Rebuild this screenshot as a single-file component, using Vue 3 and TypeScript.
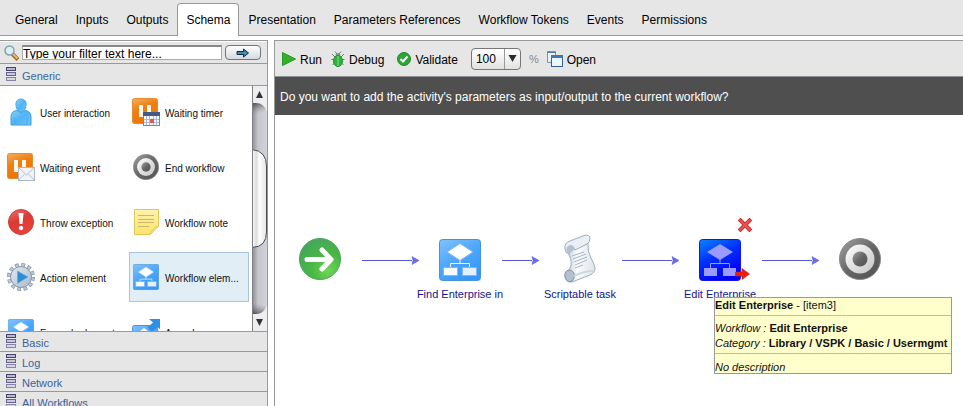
<script setup lang="ts">
import { ref } from 'vue'

interface PaletteItem {
  label: string
  icon: string
}

interface DiagramNode {
  id: string
  icon: string
  label: string
  x: number
  y: number
}

const tabs: string[] = [
  'General',
  'Inputs',
  'Outputs',
  'Schema',
  'Presentation',
  'Parameters References',
  'Workflow Tokens',
  'Events',
  'Permissions',
]
const activeTab = ref('Schema')

const palette: PaletteItem[] = [
  { label: 'User interaction', icon: 'user' },
  { label: 'Waiting timer', icon: 'timer' },
  { label: 'Waiting event', icon: 'mail' },
  { label: 'End workflow', icon: 'end' },
  { label: 'Throw exception', icon: 'error' },
  { label: 'Workflow note', icon: 'note' },
  { label: 'Action element', icon: 'gear' },
  { label: 'Workflow elem...', icon: 'flow' },
  { label: 'Foreach element', icon: 'flow' },
  { label: 'Asynchrono...', icon: 'async' },
]
const selectedItem = ref('Workflow elem...')

const groups: string[] = ['Basic', 'Log', 'Network', 'All Workflows']

const nodes: DiagramNode[] = [
  { id: 'start', icon: 'start', label: '', x: 45, y: 144 },
  { id: 'find', icon: 'flow', label: 'Find Enterprise in', x: 185, y: 144 },
  { id: 'script', icon: 'script', label: 'Scriptable task', x: 305, y: 144 },
  { id: 'edit', icon: 'flow-dark', label: 'Edit Enterprise', x: 445, y: 144 },
  { id: 'end', icon: 'end', label: '', x: 585, y: 144 },
]

const links: number[][] = [
  [87, 144],
  [227, 264],
  [347, 404],
  [487, 544],
]

const filterText = ref('Type your filter text here...')
const zoom = ref('100')
</script>

<template>
  <svg class="defs" width="0" height="0" aria-hidden="true">
    <defs>
      <linearGradient id="g-blue" x1="0" y1="0" x2="0.6" y2="1">
        <stop offset="0" stop-color="#82c4fb" />
        <stop offset="0.5" stop-color="#4fa8fb" />
        <stop offset="1" stop-color="#3797f8" />
      </linearGradient>
      <linearGradient id="g-dark" x1="0" y1="0" x2="0.5" y2="1">
        <stop offset="0" stop-color="#0a84ff" />
        <stop offset="0.5" stop-color="#0030fa" />
        <stop offset="1" stop-color="#0000f4" />
      </linearGradient>
      <linearGradient id="g-orange" x1="0" y1="0" x2="0.4" y2="1">
        <stop offset="0" stop-color="#f6ae62" />
        <stop offset="0.45" stop-color="#ee8012" />
        <stop offset="1" stop-color="#ee7400" />
      </linearGradient>
      <linearGradient id="g-person" x1="0" y1="0" x2="1" y2="1">
        <stop offset="0" stop-color="#8bd2fb" />
        <stop offset="0.5" stop-color="#4fb3f6" />
        <stop offset="1" stop-color="#6ec6fb" />
      </linearGradient>
      <linearGradient id="g-ring" x1="0" y1="0" x2="1" y2="1">
        <stop offset="0" stop-color="#a2a2a2" />
        <stop offset="0.5" stop-color="#666" />
        <stop offset="1" stop-color="#505050" />
      </linearGradient>
      <linearGradient id="g-silver" x1="0" y1="0" x2="1" y2="1">
        <stop offset="0" stop-color="#fff" />
        <stop offset="1" stop-color="#c4c4c4" />
      </linearGradient>
      <linearGradient id="g-red" x1="0" y1="0" x2="0.5" y2="1">
        <stop offset="0" stop-color="#ee7370" />
        <stop offset="0.5" stop-color="#df3834" />
        <stop offset="1" stop-color="#e8413c" />
      </linearGradient>
      <radialGradient id="g-green" cx="0.7" cy="0.78" r="0.8">
        <stop offset="0" stop-color="#6fd658" />
        <stop offset="0.5" stop-color="#48b843" />
        <stop offset="1" stop-color="#45a85a" />
      </radialGradient>
      <linearGradient id="g-note" x1="0" y1="0" x2="0" y2="1">
        <stop offset="0" stop-color="#fdf2ae" />
        <stop offset="1" stop-color="#fbe468" />
      </linearGradient>
      <linearGradient id="g-gear" x1="0" y1="0" x2="1" y2="1">
        <stop offset="0" stop-color="#e3eaf0" />
        <stop offset="1" stop-color="#a9bac9" />
      </linearGradient>
      <linearGradient id="g-paper" x1="0" y1="0" x2="1" y2="0">
        <stop offset="0" stop-color="#bcc7d2" />
        <stop offset="0.4" stop-color="#fafbfc" />
        <stop offset="1" stop-color="#dfe5ea" />
      </linearGradient>
      <linearGradient id="g-track" x1="0" y1="0" x2="1" y2="0">
        <stop offset="0" stop-color="#8a8b90" />
        <stop offset="0.4" stop-color="#c5c6cd" />
        <stop offset="1" stop-color="#d2d3da" />
      </linearGradient>
      <linearGradient id="g-thumb" x1="0" y1="0" x2="1" y2="0">
        <stop offset="0" stop-color="#fff" />
        <stop offset="0.3" stop-color="#dcdcde" />
        <stop offset="0.5" stop-color="#fff" />
        <stop offset="1" stop-color="#e6e6e8" />
      </linearGradient>
      <linearGradient id="g-shade" x1="0" y1="0" x2="0.3" y2="1">
        <stop offset="0" stop-color="#333" stop-opacity="0.9" />
        <stop offset="1" stop-color="#888" stop-opacity="0" />
      </linearGradient>
      <linearGradient id="g-shade-low" x1="0" y1="1" x2="0.3" y2="0">
        <stop offset="0" stop-color="#333" stop-opacity="0.9" />
        <stop offset="1" stop-color="#888" stop-opacity="0" />
      </linearGradient>
    </defs>

    <symbol id="ic-user" viewBox="0 0 28 28">
      <path d="M4 27V19Q4 13 10 12.500L14 15L18 12.500Q24 13 24 19V27Z" fill="url(#g-person)" stroke="#3c9fdc" />
      <path d="M14 1C18 1 19.500 4 19 7.500S17 14 14 14S9.500 11 9 7.500S10 1 14 1Z" fill="url(#g-person)" stroke="#4caae4" />
      <path d="M8 20V27M20 20V27" stroke="#48a8e4" stroke-width="0.700" />
    </symbol>

    <symbol id="ic-pause" viewBox="0 0 28 28">
      <rect x="0.500" y="0.500" width="25" height="25" rx="2" fill="url(#g-orange)" stroke="#e58a35" />
      <rect x="7" y="7" width="4" height="12" fill="#fff8ee" />
      <rect x="15" y="7" width="4" height="12" fill="#fff8ee" />
    </symbol>

    <symbol id="ic-timer" viewBox="0 0 28 28">
      <use href="#ic-pause" width="28" height="28" />
      <rect x="11.500" y="14.500" width="16" height="13" fill="#f4f8fd" stroke="#7189ae" />
      <rect x="11" y="14" width="17" height="4" fill="#425a88" />
      <path d="M12 21.500H27M12 24.500H27M14.500 18V27M17.500 18V27M21.500 18V27M24.500 18V27" stroke="#a9bcd8" />
      <rect x="18" y="21" width="4" height="4" fill="#e8564e" />
    </symbol>

    <symbol id="ic-mail" viewBox="0 0 28 28">
      <use href="#ic-pause" width="28" height="28" />
      <rect x="11.500" y="14.500" width="16" height="13" fill="#f0f4f8" stroke="#a9b8c8" />
      <path d="M12 15L19.500 22L27 15M12 27L17.500 21M27 27L21.500 21" fill="none" stroke="#b4c1cf" />
    </symbol>

    <symbol id="ic-end" viewBox="0 0 42 42">
      <circle cx="21" cy="21" r="20.500" fill="url(#g-ring)" stroke="#8a8a8a" />
      <circle cx="21" cy="21" r="14.500" fill="url(#g-silver)" />
      <circle cx="21" cy="21" r="7.500" fill="url(#g-ring)" />
    </symbol>

    <symbol id="ic-error" viewBox="0 0 28 28">
      <circle cx="14" cy="14" r="12.500" fill="url(#g-red)" stroke="#c93b38" />
      <path d="M11.500 5H16.500L15.500 16H12.500Z" fill="#fff" />
      <circle cx="14" cy="20" r="2.200" fill="#fff" />
    </symbol>

    <symbol id="ic-note" viewBox="0 0 28 28">
      <path d="M2.500 1.500H26.500V18L18 26.500H2.500Z" fill="url(#g-note)" stroke="#dfc65d" />
      <path d="M26.500 18Q20 20 18 26.500Z" fill="#fff7c8" stroke="#dfc65d" />
      <path d="M6 7.500H22M6 11.500H22M6 14.500H22M6 18.500H17" stroke="#cdb86a" />
    </symbol>

    <symbol id="ic-gear" viewBox="0 0 28 28">
      <circle cx="14" cy="14" r="12" fill="none" stroke="#798da3" stroke-width="4" stroke-dasharray="3.600 2.683" />
      <circle cx="14" cy="14" r="12" fill="none" stroke="#bccad6" stroke-width="3" stroke-dasharray="2.400 3.883" stroke-dashoffset="-0.600" />
      <circle cx="14" cy="14" r="10.500" fill="url(#g-gear)" stroke="#8799ac" />
      <path d="M10.500 8L21 14L10.500 20.500Z" fill="#2c8dd3" stroke="#5fb0e4" stroke-width="0.700" />
    </symbol>

    <symbol id="ic-flow" viewBox="0 0 42 42">
      <rect x="0.500" y="0.500" width="41" height="41" rx="3" fill="url(#g-blue)" stroke="#4692d4" />
      <path d="M21 20V25M11.500 30V24.500H30.500V30" fill="none" stroke="#fff" />
      <path d="M21 4.500L34 13L21 21.500L8 13Z" fill="#fff" stroke="#7bb8ef" />
      <rect x="4.500" y="28.500" width="14" height="8" fill="#f6fbff" stroke="#7bb8ef" />
      <rect x="23.500" y="28.500" width="14" height="8" fill="#e2f0fe" stroke="#7bb8ef" />
    </symbol>

    <symbol id="ic-flow-dark" viewBox="0 0 42 42">
      <rect x="0.500" y="0.500" width="41" height="41" rx="3" fill="url(#g-dark)" stroke="#1414ec" />
      <path d="M21 20V25M11.500 30V24.500H30.500V30" fill="none" stroke="#9a9aff" />
      <path d="M21 5L34 13L21 21L8 13Z" fill="#9a9aff" />
      <rect x="5" y="29" width="13" height="8" fill="#9a9aff" />
      <rect x="24" y="29" width="13" height="8" fill="#9a9aff" />
    </symbol>

    <symbol id="ic-async" viewBox="0 0 28 28">
      <rect x="0.500" y="7.500" width="25" height="25" rx="2" fill="url(#g-blue)" stroke="#4692d4" />
      <path d="M12 10L20 16L12 22L4 16Z" fill="#fff" />
      <path d="M17 1H29V12L25.500 9L20 14L15.500 9.500L21 4.500Z" fill="#2f8fe6" />
    </symbol>

    <symbol id="ic-start" viewBox="0 0 42 42">
      <circle cx="21" cy="21" r="20.500" fill="url(#g-green)" stroke="#4ba556" />
      <path d="M8 21.500H30M23 12L32 21.500L23 31" fill="none" stroke="#fff" stroke-width="5" stroke-linecap="round" stroke-linejoin="round" />
    </symbol>

    <symbol id="ic-script" viewBox="0 0 42 50">
      <path d="M9 17L29 9Q28 17 32 24Q35 29 36 34Q36 39 31 41L13 48Q6 48 6 41L11 34Q14 28 10 21Z" fill="url(#g-paper)" stroke="#9dabb9" />
      <path d="M6 15Q5 9 11 7L25 1.500Q31 0 31 4.500Q31 8 28 10L16 16Q14 11 11 13L10 20Q6 19 6 15Z" fill="#eaeff4" stroke="#9dabb9" />
      <path d="M8 13Q13 8 16 15L10 20Q6 18 8 13Z" fill="#b3c0cf" />
      <path d="M6 39Q7 36 11 36Q17 38 15 44Q14 48 10 48Q5 46 6 39Z" fill="#b3c0cf" stroke="#8496aa" />
      <path d="M15 42Q25 37 34 37" fill="none" stroke="#cfd8e1" stroke-width="2" />
      <path d="M13 22L25 18M14 25L27 20M15 28L28 23M16 31L28 26M16 34L24 31" stroke="#a9b6c4" />
    </symbol>

    <symbol id="ic-stack" viewBox="0 0 10 14">
      <rect x="0.500" y="0.500" width="9" height="3" fill="#b9b6d2" stroke="#46436f" />
      <rect x="0.500" y="5.500" width="9" height="3" fill="#c9c7dd" stroke="#67648f" />
      <rect x="0.500" y="10.500" width="9" height="3" fill="#d7d5e6" stroke="#8784aa" />
    </symbol>
  </svg>

  <div class="page">
    <nav class="tabs">
      <a
        v-for="tab in tabs"
        :key="tab"
        href="#"
        class="tab"
        :class="{ active: tab === activeTab }"
        @click.prevent="activeTab = tab"
      >{{ tab }}</a>
    </nav>

    <div class="columns">
      <aside class="side">
        <form class="filter" @submit.prevent>
          <label for="filter" class="filter-label" aria-label="Filter">
            <svg width="15" height="16" viewBox="0 0 15 16">
              <path d="M8.500 9L14 14.500" stroke="#9a6a25" stroke-width="4" />
              <path d="M9 9L13.500 13.500" stroke="#e5b968" stroke-width="2" />
              <circle cx="5.500" cy="5.500" r="4.500" fill="#dceff5" stroke="#7fa3ae" stroke-width="1.500" />
            </svg>
          </label>
          <input id="filter" v-model="filterText" type="text" class="filter-input" />
          <button type="submit" class="go" aria-label="Apply filter">
            <svg width="14" height="10" viewBox="0 0 14 10">
              <path d="M1 3.500H7.500V1L12.500 5L7.500 9V6.500H1Z" fill="#3f8fae" stroke="#17224f" />
            </svg>
          </button>
        </form>

        <button type="button" class="group first">
          <svg width="10" height="14"><use href="#ic-stack" /></svg>
          <span>Generic</span>
        </button>

        <div class="palette">
          <div class="items">
            <button
              v-for="item in palette"
              :key="item.label"
              type="button"
              class="item"
              :class="{ selected: item.label === selectedItem }"
              @click="selectedItem = item.label"
            >
              <svg class="item-icon" :class="item.icon"><use :href="'#ic-' + item.icon" /></svg>
              <span>{{ item.label }}</span>
            </button>
          </div>
          <svg class="scroll" width="15" height="245" viewBox="0 0 15 245" aria-hidden="true">
            <rect width="15" height="245" fill="url(#g-track)" />
            <rect y="16" width="15" height="12" fill="url(#g-shade)" />
            <rect y="217" width="15" height="12" fill="url(#g-shade-low)" />
            <path d="M0 0H15V26Q12 17 4 17H0Z" fill="#eeeef0" />
            <path d="M0 245H15V219Q12 228 4 228H0Z" fill="#eeeef0" />
            <path d="M0 63.500Q14.500 65 14.500 80V146Q14.500 161 0 161.500Z" fill="url(#g-thumb)" stroke="#4a4a4c" />
            <path d="M7.500 5L11 12H4Z" fill="#333" />
            <path d="M7.500 240L11 233H4Z" fill="#333" />
            <path d="M0.500 0V245" stroke="#808084" />
          </svg>
        </div>

        <button v-for="group in groups" :key="group" type="button" class="group">
          <svg width="10" height="14"><use href="#ic-stack" /></svg>
          <span>{{ group }}</span>
        </button>
      </aside>

      <main class="editor">
        <div class="toolbar">
          <button type="button" class="tool run">
            <svg width="14" height="14" viewBox="0 0 14 14">
              <path d="M0.500 0.500L13.500 7L0.500 13.500Z" fill="#34b02a" stroke="#239a24" />
            </svg>
            <span>Run</span>
          </button>
          <button type="button" class="tool debug">
            <svg width="14" height="16" viewBox="0 0 14 16">
              <path d="M1 3L4 6M13 3L10 6M0.500 8.500H3M13.500 8.500H11M1.500 14L4 11.500M12.500 14L10 11.500M4 0.500L6 3M10 0.500L8 3" stroke="#6f8070" fill="none" />
              <ellipse cx="7" cy="4" rx="2.500" ry="2" fill="#7d9c7c" />
              <ellipse cx="7" cy="10" rx="4.500" ry="5.500" fill="#2eb43b" stroke="#249038" />
              <path d="M7 5V15" stroke="#8ae08d" />
            </svg>
            <span>Debug</span>
          </button>
          <button type="button" class="tool validate">
            <svg width="14" height="14" viewBox="0 0 14 14">
              <circle cx="7" cy="7" r="6.500" fill="#2ea336" stroke="#208b2d" />
              <path d="M3.500 7L6 9.500L10.500 4.500" fill="none" stroke="#fff" stroke-width="2" />
            </svg>
            <span>Validate</span>
          </button>
          <div class="zoom">
            <select v-model="zoom" aria-label="Zoom">
              <option>50</option>
              <option>100</option>
              <option>200</option>
            </select>
            <svg class="zoom-arrow" width="16" height="20" viewBox="0 0 16 20" aria-hidden="true">
              <path d="M0.500 0V20" stroke="#999" />
              <path d="M4.500 6H12.500L8.500 13Z" fill="#2c2c2c" />
            </svg>
          </div>
          <span class="percent">%</span>
          <button type="button" class="tool">
            <svg width="16" height="16" viewBox="0 0 16 16">
              <path d="M0.500 11.500V0.500H8.500V4M0.500 11.500H4" fill="#e9f1f9" stroke="#7594b5" />
              <path d="M0 1.500H9" stroke="#55799f" />
              <rect x="4.500" y="4.500" width="11" height="11" fill="#eef6fd" stroke="#2f659f" />
              <rect x="4" y="4" width="12" height="3" fill="#3c78b5" />
            </svg>
            <span>Open</span>
          </button>
        </div>

        <div class="banner">Do you want to add the activity's parameters as input/output to the current workflow?</div>

        <div class="canvas">
          <svg class="links" aria-hidden="true">
            <g v-for="link in links" :key="link[0]">
              <path :d="`M${link[0]} 145.500H${link[1] - 7}`" stroke="#5656d6" />
              <path :d="`M${link[1] - 7} 141.500L${link[1]} 145.500L${link[1] - 7} 149.500L${link[1] - 6} 145.500Z`" fill="#6a6af0" stroke="#5656d6" stroke-width="0.500" />
            </g>
          </svg>

          <div
            v-for="node in nodes"
            :key="node.id"
            class="node"
            :style="{ left: node.x + 'px', top: node.y + 'px' }"
          >
            <svg class="node-icon" :class="node.icon"><use :href="'#ic-' + node.icon" /></svg>
            <span class="node-label">{{ node.label }}</span>
          </div>

          <button type="button" class="remove" aria-label="Remove">
            <svg width="14" height="14" viewBox="0 0 14 14">
              <path d="M2.500 2.500L11.500 11.500M11.500 2.500L2.500 11.500" stroke="#b92a2a" stroke-width="4" stroke-linecap="square" />
              <path d="M2.500 2.500L11.500 11.500M11.500 2.500L2.500 11.500" stroke="#e75150" stroke-width="2.500" stroke-linecap="square" />
            </svg>
          </button>
          <svg class="red-arrow" width="15" height="12" viewBox="0 0 15 12" aria-hidden="true">
            <path d="M0.500 4H7V0.500L14.500 6L7 11.500V8H0.500Z" fill="#f01d0c" stroke="#c02020" stroke-width="0.600" />
          </svg>

          <div class="tip" role="tooltip">
            <p><b>Edit Enterprise</b> - [item3]</p>
            <p class="middle">
              <i>Workflow :</i> <b>Edit Enterprise</b><br />
              <i>Category :</i> <b>Library / VSPK / Basic / Usermgmt</b>
            </p>
            <p class="last"><i>No description</i></p>
          </div>
        </div>
      </main>
    </div>
  </div>
</template>

<style>
body {
  overflow: hidden;
  background: #fff;
}
</style>

<style scoped>
* {
  box-sizing: border-box;
}

.defs {
  position: absolute;
}

.page {
  display: flex;
  flex-direction: column;
  height: 100vh;
  overflow: hidden;
  font-family: "Liberation Sans", Arial, sans-serif;
  font-size: 12px;
  color: #000;
}

button,
input,
select {
  font: inherit;
  color: inherit;
}

button {
  margin: 0;
  padding: 0;
  border: 0;
  background: none;
  text-align: left;
}

svg {
  display: block;
  flex: none;
}

.tabs {
  display: flex;
  flex: none;
  height: 36px;
  padding: 3px 0 0 6px;
  background: #e6e6e6;
  border-bottom: 1px solid #999;
}

.tab {
  height: 33px;
  padding: 0 8px;
  border: 1px solid transparent;
  border-bottom: 0;
  line-height: 32px;
  color: #000;
  text-decoration: none;
  white-space: nowrap;
}

.tab.active {
  background: #fff;
  border-color: #999;
  border-radius: 4px 4px 0 0;
}

.columns {
  display: flex;
  flex: 1;
  gap: 6px;
  min-height: 0;
  padding-top: 4px;
}

.side {
  flex: none;
  width: 268px;
  overflow: hidden;
  border-top: 1px solid #999;
  border-right: 1px solid #999;
}

.filter {
  display: flex;
  align-items: center;
  gap: 3px;
  height: 22px;
  padding: 0 6px 0 4px;
  background: #e6e6e6;
  border-top: 1px solid #fff;
}

.filter-input {
  flex: 1;
  min-width: 0;
  height: 15px;
  padding: 1px 0 0;
  border: 1px solid #aaa;
  border-top: 2px solid #888;
  border-radius: 0;
  background: #fff;
  outline: 0;
}

.go {
  display: flex;
  align-items: center;
  justify-content: center;
  width: 36px;
  height: 15px;
  border: 1px solid #6f7680;
  border-radius: 4px;
  background: linear-gradient(#fff, #d5d8de);
}

.group {
  display: flex;
  align-items: center;
  gap: 6px;
  width: 100%;
  height: 20px;
  padding: 0 6px;
  background: #e6e6e6;
  border-top: 1px solid #999;
  font-size: 11px;
  line-height: 16px;
  color: #38649a;
}

.group svg {
  margin-bottom: 1px;
}

.group span,
.item span,
.tool span {
  padding-top: 2px;
}

.group.first {
  height: 23px;
  border-bottom: 1px solid #999;
}

.palette {
  display: flex;
  justify-content: space-between;
  height: 245px;
  overflow: hidden;
}

.items {
  display: grid;
  grid-template-columns: 120px 120px;
  grid-auto-rows: 50px;
  gap: 5px;
  padding: 1px 0 0 4px;
}

.item {
  display: flex;
  align-items: center;
  gap: 5px;
  padding: 0 2px;
  border: 1px solid transparent;
  font-size: 10px;
  color: #111;
  white-space: nowrap;
}

.item.selected {
  background: #e1eef6;
  border-color: #a6c6df;
}

.item-icon {
  width: 28px;
  height: 28px;
  overflow: visible;
}

.item-icon.end,
.item-icon.flow {
  padding: 1px;
}

.editor {
  display: flex;
  flex: 1;
  flex-direction: column;
  min-width: 0;
  border-top: 1px solid #999;
  border-left: 1px solid #999;
}

.toolbar {
  display: flex;
  flex: none;
  align-items: center;
  height: 36px;
  padding-left: 7px;
  background: #e6e6e6;
  border-bottom: 1px solid #8e9096;
}

.tool {
  display: flex;
  align-items: center;
  gap: 4px;
}

.run {
  margin-right: 9px;
}

.debug,
.validate {
  margin-right: 13px;
}

.zoom {
  position: relative;
  margin-right: 8px;
}

.zoom select {
  display: block;
  width: 50px;
  height: 22px;
  padding: 1px 16px 0 4px;
  border: 1px solid #777;
  border-radius: 4px;
  background: linear-gradient(#fff, #e2e2e2);
  appearance: none;
}

.zoom-arrow {
  position: absolute;
  top: 1px;
  right: 1px;
  pointer-events: none;
}

.percent {
  margin-right: 8px;
  font-size: 11px;
  color: #888;
}

.banner {
  flex: none;
  padding: 2px 0 0 5px;
  background: #4f4f4f;
  line-height: 36px;
  color: #fff;
  white-space: nowrap;
}

.canvas {
  position: relative;
  flex: 1;
  min-height: 0;
  overflow: hidden;
  background: #fff;
}

.links {
  position: absolute;
  top: 0;
  left: 0;
  width: 100%;
  height: 100%;
}

.node {
  position: absolute;
}

.node-icon {
  position: absolute;
  top: -21px;
  left: -21px;
  width: 42px;
  height: 42px;
}

.node-icon.script {
  top: -25px;
  height: 50px;
}

.node-icon.flow,
.node-icon.flow-dark {
  top: -20px;
}

.node-label {
  position: absolute;
  top: 28px;
  left: 0;
  transform: translateX(-50%);
  font-size: 11px;
  line-height: 14px;
  color: #14148c;
  white-space: nowrap;
}

.remove {
  position: absolute;
  top: 103px;
  left: 463px;
}

.red-arrow {
  position: absolute;
  top: 153px;
  left: 460px;
}

.tip {
  position: absolute;
  top: 182px;
  left: 439px;
  min-width: 238px;
  background: #ffffcc;
  border: 1px solid #999;
  font-size: 11px;
  line-height: 15px;
  color: #111;
  white-space: nowrap;
}

.tip p {
  margin: 0;
  padding-bottom: 2px;
}

.tip .middle {
  padding: 5px 0 2px;
  border-top: 1px solid #bbb;
  border-bottom: 1px solid #bbb;
}

.tip .last {
  padding: 7px 0 0;
  line-height: 12px;
}
</style>
